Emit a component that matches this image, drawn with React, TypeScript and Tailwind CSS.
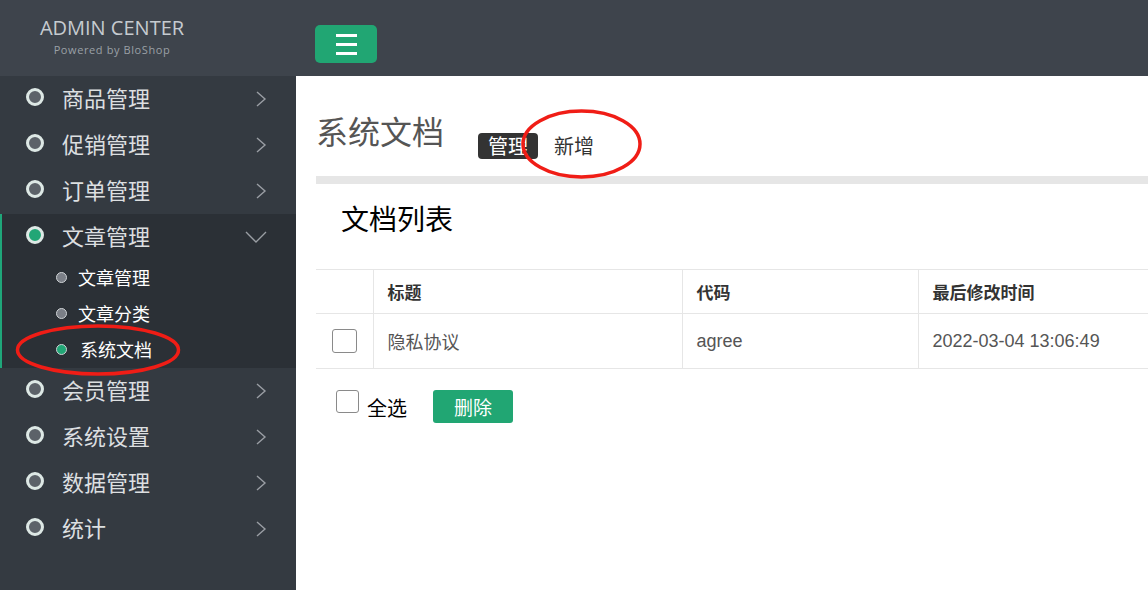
import React from 'react';

const cjk = { fontFamily: '"Noto Sans CJK SC", "Liberation Sans", sans-serif' };
const body = { fontFamily: '"Liberation Sans", "Noto Sans CJK SC", sans-serif' };

interface MenuItem {
  label: string;
  children?: { label: string; active?: boolean }[];
}

const menu: MenuItem[] = [
  { label: '商品管理' },
  { label: '促销管理' },
  { label: '订单管理' },
  {
    label: '文章管理',
    children: [{ label: '文章管理' }, { label: '文章分类' }, { label: '系统文档', active: true }],
  },
  { label: '会员管理' },
  { label: '系统设置' },
  { label: '数据管理' },
  { label: '统计' },
];

const ChevronRight = () => (
  <svg width="12" height="16" viewBox="0 0 12 16" fill="none">
    <path d="M2 1 L10 8 L2 15" stroke="#9a9ea4" strokeWidth="1.4" />
  </svg>
);

const ChevronDown = () => (
  <svg width="22" height="12" viewBox="0 0 22 12" fill="none">
    <path d="M1 1 L11 11 L21 1" stroke="#9a9ea4" strokeWidth="1.4" />
  </svg>
);

const Ring = ({ active }: { active?: boolean }) => (
  <span
    className={
      'block w-[18px] h-[18px] rounded-full border-[3px] border-[#dde8e5] ' +
      (active ? 'bg-[#22a676]' : 'bg-[#5c6269]')
    }
  />
);

const MenuRow = ({ item }: { item: MenuItem }) => {
  const open = !!item.children;
  return (
    <div className={open ? 'bg-[#2b3036] border-l-2 border-[#1fa67a]' : ''}>
      <div className={'flex items-center h-[46px] pb-[5px] pr-[29px] ' + (open ? 'pl-[24px]' : 'pl-[26px]')}>
        <Ring active={open} />
        <span className="ml-[18px] text-[22px] text-[#dcdfe0] leading-none" style={cjk}>
          {item.label}
        </span>
        <span className="ml-auto mt-[5px] flex items-center">{open ? <ChevronDown /> : <ChevronRight />}</span>
      </div>
      {item.children?.map((c) => (
        <div key={c.label} className="flex items-center h-[36px] pb-[2px] pl-[54px]">
          <span
            className={
              'block w-[11px] h-[11px] rounded-full border border-[#cfd3d6] ' +
              (c.active ? 'bg-[#22a676]' : 'bg-[#7b7f87]')
            }
          />
          <span className={'text-[18px] text-white leading-none ' + (c.active ? 'ml-[13px]' : 'ml-[11px]')} style={cjk}>
            {c.label}
          </span>
        </div>
      ))}
    </div>
  );
};

const Checkbox = ({ className }: { className: string }) => (
  <span className={'block rounded-[3px] border border-[#8a8a8a] bg-white ' + className} />
);

export default function App() {
  return (
    <div className="flex w-[1148px] h-[590px] overflow-hidden bg-white" style={body}>
      <aside className="relative w-[296px] shrink-0 flex flex-col bg-[#343a41]">
        <div className="h-[76px] bg-[#3e444c] pt-[15px] pl-[37px]">
          <div className="w-[150px] text-center whitespace-nowrap">
            <div className="text-[20px] leading-[26px] text-[#c6cbd0]" style={{ fontFamily: '"Open Sans", sans-serif' }}>
              ADMIN CENTER
            </div>
            <div className="mt-[1px] text-[11px] leading-[16px] text-[#9aa0a6] tracking-[0.6px]" style={{ fontFamily: '"Open Sans", sans-serif' }}>
              Powered by BloShop
            </div>
          </div>
        </div>
        <nav>
          {menu.map((m) => (
            <MenuRow key={m.label} item={m} />
          ))}
        </nav>
        <svg className="absolute left-[15px] top-[323px] pointer-events-none" width="168" height="54" viewBox="0 0 168 54">
          <ellipse cx="83" cy="27" rx="80.5" ry="24" fill="none" stroke="#f01d16" strokeWidth="3.5" />
        </svg>
      </aside>

      <main className="relative flex-1 min-w-0 flex flex-col">
        <header className="h-[76px] shrink-0 bg-[#3e444c] flex items-start pt-[25px] pl-[19px]">
          <button className="w-[62px] h-[38px] rounded-[5px] bg-[#21a673] flex flex-col items-center justify-center gap-[6px]">
            <span className="block w-[21px] h-[3px] bg-white" />
            <span className="block w-[21px] h-[3px] bg-white" />
            <span className="block w-[21px] h-[3px] bg-white" />
          </button>
        </header>

        <div className="pl-[20px]">
          <div className="h-[100px] flex items-start pt-[34px]">
            <h1 className="text-[32px] leading-[40px] text-[#555]" style={cjk}>
              系统文档
            </h1>
            <div className="ml-[34px] mt-[23px] flex items-center">
              <span className="h-[26px] leading-[26px] px-[10px] rounded-[4px] bg-[#333] text-white text-[20px]" style={cjk}>
                管理
              </span>
              <span className="ml-[16px] text-[20px] leading-[26px] text-[#333]" style={cjk}>
                新增
              </span>
            </div>
          </div>
          <div className="h-[8px] bg-[#e6e6e6]" />
          <div className="h-[85px] pt-[15px] pl-[25px]">
            <h2 className="text-[28px] leading-[38px] text-black" style={cjk}>
              文档列表
            </h2>
          </div>

          <table className="w-[832px] border-collapse text-[17px]">
            <thead>
              <tr className="h-[44px] border-t border-b border-[#e6e6e6]">
                <th className="w-[57px] border-r border-[#e6e6e6]" />
                <th className="w-[309px] border-r border-[#e6e6e6] text-left pl-[14px] font-bold text-[#333]" style={cjk}>
                  标题
                </th>
                <th className="w-[236px] border-r border-[#e6e6e6] text-left pl-[14px] font-bold text-[#333]" style={cjk}>
                  代码
                </th>
                <th className="text-left pl-[14px] font-bold text-[#333]" style={cjk}>
                  最后修改时间
                </th>
              </tr>
            </thead>
            <tbody>
              <tr className="h-[55px] border-b border-[#e6e6e6] text-[#555]">
                <td className="border-r border-[#e6e6e6]">
                  <Checkbox className="ml-[16px] w-[25px] h-[24px]" />
                </td>
                <td className="border-r border-[#e6e6e6] pl-[14px] text-[18px]" style={cjk}>
                  隐私协议
                </td>
                <td className="border-r border-[#e6e6e6] pl-[14px] text-[18px]">agree</td>
                <td className="pl-[14px] text-[18px]">2022-03-04 13:06:49</td>
              </tr>
            </tbody>
          </table>

          <div className="mt-[21px] flex items-start">
            <Checkbox className="ml-[20px] w-[23px] h-[23px]" />
            <span className="ml-[8px] mt-[6px] text-[20px] leading-[24px] text-black" style={cjk}>
              全选
            </span>
            <button className="ml-[26px] w-[80px] h-[33px] rounded-[3px] bg-[#21a673] text-white text-[19px] leading-[33px]" style={cjk}>
              删除
            </button>
          </div>
        </div>

        <svg className="absolute left-[224px] top-[108px] pointer-events-none" width="124" height="72" viewBox="0 0 124 72">
          <ellipse cx="61.5" cy="36" rx="58.5" ry="33" fill="none" stroke="#f01d16" strokeWidth="3.5" />
        </svg>
      </main>
    </div>
  );
}
